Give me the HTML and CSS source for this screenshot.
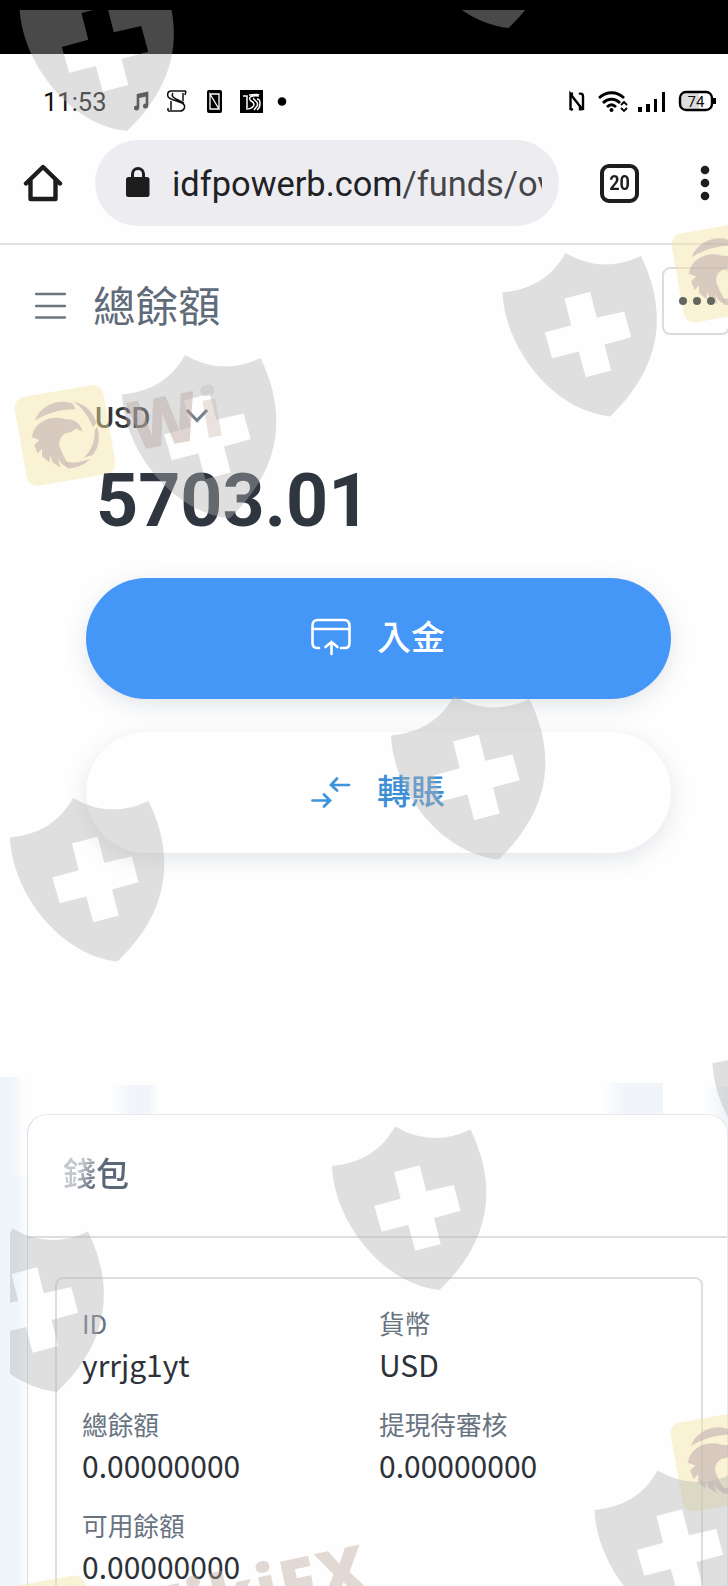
FILE: index.html
```
<!DOCTYPE html>
<html lang="zh-TW">
<head>
    <meta charset="UTF-8">
    <meta name="viewport" content="width=device-width, initial-scale=1.0">
    <title>總餘額</title>
    <link rel="stylesheet" href="styles.css">
</head>
<body>
    <div class="screen">
        <div class="notch"></div>

        <!-- 狀態列 -->
        <div class="status-bar">
            <span class="clock">11:53</span>
            <svg class="status-left" width="160" height="26" viewBox="0 0 160 26">
                <g fill="#222" stroke="#222" stroke-width="2">
                    <path d="M5 19V6l9-2v13M5 8l9-2" fill="none" stroke-width="2.600"/>
                    <circle cx="3.500" cy="19" r="1.500"/>
                    <circle cx="12.500" cy="17" r="1.500"/>
                </g>
                <path d="M53 2H38c-4 0-5 6 0 8l11 4c5 3 2 8-2 8H35M53 2l-1 4M35 22v-3M40 4c-2 3 0 4 3 6l8 4M38 12v9M50 4v8" fill="none" stroke="#111" stroke-width="1.500"/>
                <rect x="74" y="1" width="15" height="23" rx="2" fill="#000"/>
                <path d="M77 5v15h9zM77 5h9v15" fill="none" stroke="#fff" stroke-width="1.300"/>
                <path d="M107 1h23v23h-23z" fill="#000"/>
                <path d="M110 7h4v12M116 6c2 0 10-1 10 0M126 7c-7-1-12 1-8 5 6 3 2 8-5 8M121 9c-2 2 6 3 3 8l-3 4M124 10c4 0 4 8 0 11" fill="none" stroke="#fff" stroke-width="1.500"/>
                <circle cx="149" cy="12.500" r="4.300" fill="#000"/>
            </svg>
            <svg class="status-right" width="148" height="24" viewBox="0 0 148 24">
                <g fill="none" stroke="#000" stroke-width="2.400">
                    <path d="M2.500 20V4l10 13M5 3.500L2.500 4M2.500 20l2.500-1M15 20V6c0-2-2-3-4-2M15 20L5 7.500M12 16v4.500"/>
                    <path d="M31 8c7-7 18-7 25 0M35 13c5-5 12-5 17 0M39 17c3-3 6-3 9 0" stroke-width="2.800"/>
                    <path d="M53 15l3-3 3 3M53 18l3 3 3-3" stroke-width="1.800"/>
                </g>
                <circle cx="43.500" cy="20" r="2" fill="#000"/>
                <path d="M70 17h4v5h-4zM78 14h4v8h-4zM86 9h3v13h-3zM94 2h3v20h-3z" fill="#000"/>
                <path d="M118 2h13v18h-13c-4 0-6-3-6-9s2-9 6-9z" fill="#ddd"/>
                <rect x="112" y="2" width="32" height="18" rx="6" fill="none" stroke="#000" stroke-width="2.400"/>
                <path d="M145 8h3v6h-3z" fill="#000"/>
                <text x="128" y="16.500" text-anchor="middle" font-family="Roboto, sans-serif" font-size="15" fill="#111">74</text>
            </svg>
        </div>

        <!-- 瀏覽器網址列 -->
        <div class="browser-bar">
            <svg width="40" height="40" viewBox="0 0 40 40">
                <path d="M3 20.500L20 4l17 16.500M7.500 17v19h25V17" fill="none" stroke="#1d1d1d" stroke-width="4.400" stroke-linejoin="round" stroke-linecap="round"/>
            </svg>
            <div class="url-box">
                <svg width="24" height="32" viewBox="0 0 24 32">
                    <path d="M6.500 12V8a5.500 5.500 0 0 1 11 0v4" fill="none" stroke="#1d1d1d" stroke-width="3"/>
                    <rect x="0" y="11" width="23.500" height="20" rx="2.500" fill="#1d1d1d"/>
                </svg>
                <span class="url">idfpowerb.com<span>/funds/ov</span></span>
            </div>
            <span class="tabs"><span>20</span></span>
            <svg class="kebab" width="10" height="36" viewBox="0 0 10 36" fill="#1d1d1d">
                <circle cx="5" cy="5" r="4.300"/>
                <circle cx="5" cy="18" r="4.300"/>
                <circle cx="5" cy="31" r="4.300"/>
            </svg>
        </div>

        <!-- 總餘額 -->
        <div class="title-bar">
            <svg width="32" height="28" viewBox="0 0 32 28">
                <path d="M1 2h29M1 14h29M1 25.500h29" stroke="#6b7683" stroke-width="2.300" stroke-linecap="round"/>
            </svg>
            <h1>總餘額</h1>
            <button class="more-btn"><i></i><i></i><i></i></button>
        </div>

        <div class="balance">
            <div class="currency">
                <span>USD</span>
                <svg width="24" height="16" viewBox="0 0 24 16">
                    <path d="M2 2l10 10.500L22 2" fill="none" stroke="#76818e" stroke-width="3.200"/>
                </svg>
            </div>
            <div class="amount">5703.01</div>
            <button class="action-btn deposit-btn">
                <svg width="40" height="38" viewBox="0 0 40 38" fill="none" stroke="#fff" stroke-width="2.600" stroke-linecap="round">
                    <path d="M8 30H6c-3 0-4.500-2-4.500-5V8C1.500 4 3 2 7 2h26c4 0 5.500 2 5.500 6v17c0 3-1.500 5-4.500 5h-4M2 11h36"/>
                    <path d="M20.500 36V24M14.500 29l6-5 6 5"/>
                </svg>
                <span>入金</span>
            </button>
            <button class="action-btn transfer-btn">
                <svg width="40" height="34" viewBox="0 0 40 34" fill="none" stroke="#3d93dc" stroke-width="2.700" stroke-linecap="round">
                    <path d="M38 11H20M26 4.500L20 11l6 5.500M1.500 26.500h17M13 20.500l6 6-6 6"/>
                </svg>
                <span>轉賬</span>
            </button>
        </div>

        <!-- 錢包 -->
        <div class="wallet-section">
            <div class="wallet-card">
                <h2>錢包</h2>
                <div class="wallet-item">
                    <div class="field">
                        <div class="label">ID</div>
                        <div class="value">yrrjg1yt</div>
                    </div>
                    <div class="field">
                        <div class="label">貨幣</div>
                        <div class="value">USD</div>
                    </div>
                    <div class="field">
                        <div class="label">總餘額</div>
                        <div class="value">0.00000000</div>
                    </div>
                    <div class="field">
                        <div class="label">提現待審核</div>
                        <div class="value">0.00000000</div>
                    </div>
                    <div class="field">
                        <div class="label">可用餘額</div>
                        <div class="value">0.00000000</div>
                    </div>
                </div>
            </div>
        </div>

        <!-- 浮水印 -->
        <svg class="watermark" width="728" height="1586" viewBox="0 0 728 1586">
            <defs>
                <clipPath id="area"><path d="M10 10h718v1576H10z"/></clipPath>
                <path id="shield" fill="#b3b3b3" fill-opacity=".408" fill-rule="evenodd" d="M0 40C30 37 50 24 63 .5Q100 22 138.500 3.500C166 60 159 115 107.500 164 50 158 2 95 0 40zM62 46l6.700 26.700L42.300 80l7.400 25.700L76.300 99l7 25.700 25.400-6.700L102 92l26.700-7.300-7-25.700-27.400 6.300-6.600-26z"/>
                <g id="eagle" transform="rotate(-10)">
                    <rect x="-45" y="-45" width="90" height="90" rx="11" fill="#f5e4a2" fill-opacity=".45"/>
                    <g fill="#b9a2ac" fill-opacity=".5">
                        <path d="M-27-20C-19-34 0-38 13-30L15-24C0-27-14-25-27-20z"/>
                        <path d="M14-32C26-27 32-18 33-7L29-3C26-16 22-24 14-32z"/>
                        <path d="M33-3C35 8 31 18 24 24L15 25C25 18 29 9 30 0z"/>
                        <path d="M21 27C15 32 6 34-3 33L-4 26C4 29 14 29 21 27z"/>
                        <path d="M-33-4C-28-19-10-23 3-16 12-15 17-10 18-1L12-5C7-2 5-2 1-2-7 1-9 8-6 15-5 22-1 27-3 32-8 29-10 25-11 20L-10 31-17 24-18 17-20 24-26 17-25 9-30 13-32 4-26 0z"/>
                    </g>
                </g>
            </defs>
            <g clip-path="url(#area)">
                <use href="#eagle" x="65" y="435.500"/>
                <use href="#eagle" x="722" y="272"/>
                <use href="#eagle" x="721" y="1461"/>
                <use href="#eagle" x="47" y="1626"/>
                <text class="brand" transform="translate(133 451) rotate(-10)" fill="#b49a91" fill-opacity=".42">W<tspan fill-opacity=".28">i</tspan></text>
                <text class="brand" transform="translate(121 1645) rotate(-12)" fill="#b9a096" fill-opacity=".4">WikiFX</text>
                <use href="#shield" x="19.500" y="-33"/>
                <use href="#shield" x="401" y="-136"/>
                <use href="#shield" x="502.500" y="252.500"/>
                <use href="#shield" x="122" y="354.500"/>
                <use href="#shield" x="391" y="695.500"/>
                <use href="#shield" x="10" y="797.500"/>
                <use href="#shield" x="712.500" y="1023"/>
                <use href="#shield" x="332" y="1126"/>
                <use href="#shield" x="-50.500" y="1228"/>
                <use href="#shield" x="594.500" y="1470"/>
            </g>
        </svg>
    </div>
</body>
</html>
```
FILE: styles.css
```
* {
    margin: 0;
    padding: 0;
    box-sizing: border-box;
}

body {
    background-color: #fefefe;
    font-family: 'Noto Sans CJK TC', sans-serif;
}

.screen {
    position: relative;
    width: 728px;
    height: 1586px;
    overflow: hidden;
}

.notch {
    height: 54px;
    background-color: #000;
}

.status-bar {
    display: flex;
    align-items: center;
    height: 86px;
    padding: 10px 12px 0 43px;
    font-family: Roboto, sans-serif;
}

.clock {
    width: 90px;
    font-size: 25.5px;
    font-weight: 400;
    color: #111;
}

.status-right {
    margin-left: auto;
}

.browser-bar {
    display: flex;
    align-items: center;
    height: 105px;
    padding: 0 18px 17px 23px;
    border-bottom: 2px solid #e0e0e2;
    font-family: Roboto, sans-serif;
}

.url-box {
    display: flex;
    align-items: center;
    width: 464px;
    height: 86px;
    margin-left: 32px;
    padding: 0 17px 0 31px;
    border-radius: 43px;
    background-color: #ededf1;
}

.url-box svg {
    flex-shrink: 0;
    margin-bottom: 3px;
}

.url {
    flex: 1;
    margin-left: 22px;
    padding-top: 2px;
    overflow: hidden;
    white-space: nowrap;
    font-size: 34.4px;
    color: #202124;
}

.url span {
    color: #45464a;
}

.tabs {
    width: 39px;
    height: 39px;
    margin-left: 41px;
    border: 4px solid #1d1d1d;
    border-radius: 9px;
    font-size: 21px;
    font-weight: bold;
    line-height: 31px;
    text-align: center;
    color: #1d1d1d;
}

.tabs span {
    display: block;
    transform: scaleX(0.86);
}

.kebab {
    margin-left: auto;
}

.title-bar {
    display: flex;
    align-items: center;
    height: 122px;
    padding-left: 35px;
}

h1 {
    margin: -5px 0 0 26px;
    font-size: 42.5px;
    font-weight: 400;
    line-height: 60px;
    color: #5f6b79;
}

.more-btn {
    display: flex;
    align-items: center;
    gap: 6px;
    flex-shrink: 0;
    width: 68px;
    height: 68px;
    margin: 0 -2px 11px auto;
    padding-left: 15px;
    border: 2px solid #dcdcdd;
    border-radius: 8px;
    background: none;
}

.more-btn i {
    position: relative;
    z-index: 1;
    width: 8px;
    height: 8px;
    border-radius: 50%;
    background-color: #65675f;
}

.balance {
    height: 710px;
    padding: 30px 57px 0 86px;
}

.currency {
    display: flex;
    align-items: center;
    height: 42px;
    padding-left: 9px;
    font: 500 29px Roboto, sans-serif;
    color: #333539;
}

.currency svg {
    margin-left: 35px;
    margin-top: -4px;
}

.amount {
    height: 139px;
    padding: 19px 0 0 10px;
    font: bold 73.5px/86px Roboto, sans-serif;
    color: #2f3640;
}

.action-btn {
    display: flex;
    align-items: center;
    width: 585px;
    height: 121px;
    padding: 0 0 3px 225px;
    border: none;
    border-radius: 61px;
    box-shadow: 0 6px 22px rgba(70, 90, 115, 0.15);
    font: 500 34px 'Noto Sans CJK TC', sans-serif;
}

.action-btn span {
    margin: -4px 0 0 26px;
}

.deposit-btn {
    background-color: #4496f7;
    color: #fff;
}

.transfer-btn {
    margin-top: 33px;
    background-color: #fefefe;
    color: #3d8fd3;
}

.wallet-section {
    height: 509px;
    padding: 37px 0 0 27px;
    background:
        linear-gradient(to right, #f0f5fa 60%, #fbfcfd) 0 100px / 27px 409px no-repeat,
        linear-gradient(to right, #eff4f9 40%, #fefefe) 0 0 / 26px 100px no-repeat,
        linear-gradient(to right, #fefefe, #f1f5fa 40%, #f1f5fa 75%, #fefefe) 112px 8px / 48px 29px no-repeat,
        linear-gradient(to right, #fefefe, #f1f5fa 40%) 600px 6px / 63px 31px no-repeat,
        linear-gradient(to right, #fefefe, #edf2f7) 704px 10px / 24px 80px no-repeat;
}

.wallet-card {
    height: 480px;
    border: 1px solid #e6eaed;
    border-left-color: #d9dde0;
    border-radius: 20px 20px 0 0;
    background-color: #fefefe;
}

h2 {
    height: 123px;
    padding: 33px 0 0 35px;
    border-bottom: 2px solid #dedede;
    font-size: 33px;
    line-height: 48px;
    font-weight: 500;
    color: #5b6676;
    background: linear-gradient(115deg, #c3c7cb 70px, #5b6676 90px) no-repeat;
    -webkit-background-clip: text;
    background-clip: text;
    -webkit-text-fill-color: transparent;
}

.wallet-item {
    display: grid;
    grid-template-columns: 297px 1fr;
    grid-auto-rows: 101px;
    width: 648px;
    height: 400px;
    margin: 39px 0 0 27px;
    padding: 24px 0 0 25px;
    border: 2px solid #dedede;
    border-radius: 8px;
}

.label {
    height: 39px;
    font-size: 25.7px;
    line-height: 39px;
    color: #687380;
}

.value {
    height: 44px;
    font-size: 30px;
    line-height: 44px;
    color: #2d3138;
}

/* 浮水印蓋在所有內容上面 */
.watermark {
    position: absolute;
    top: 0;
    left: 0;
    pointer-events: none;
}

.brand {
    font: 800 68px 'Open Sans', sans-serif;
    letter-spacing: 2px;
}
```
